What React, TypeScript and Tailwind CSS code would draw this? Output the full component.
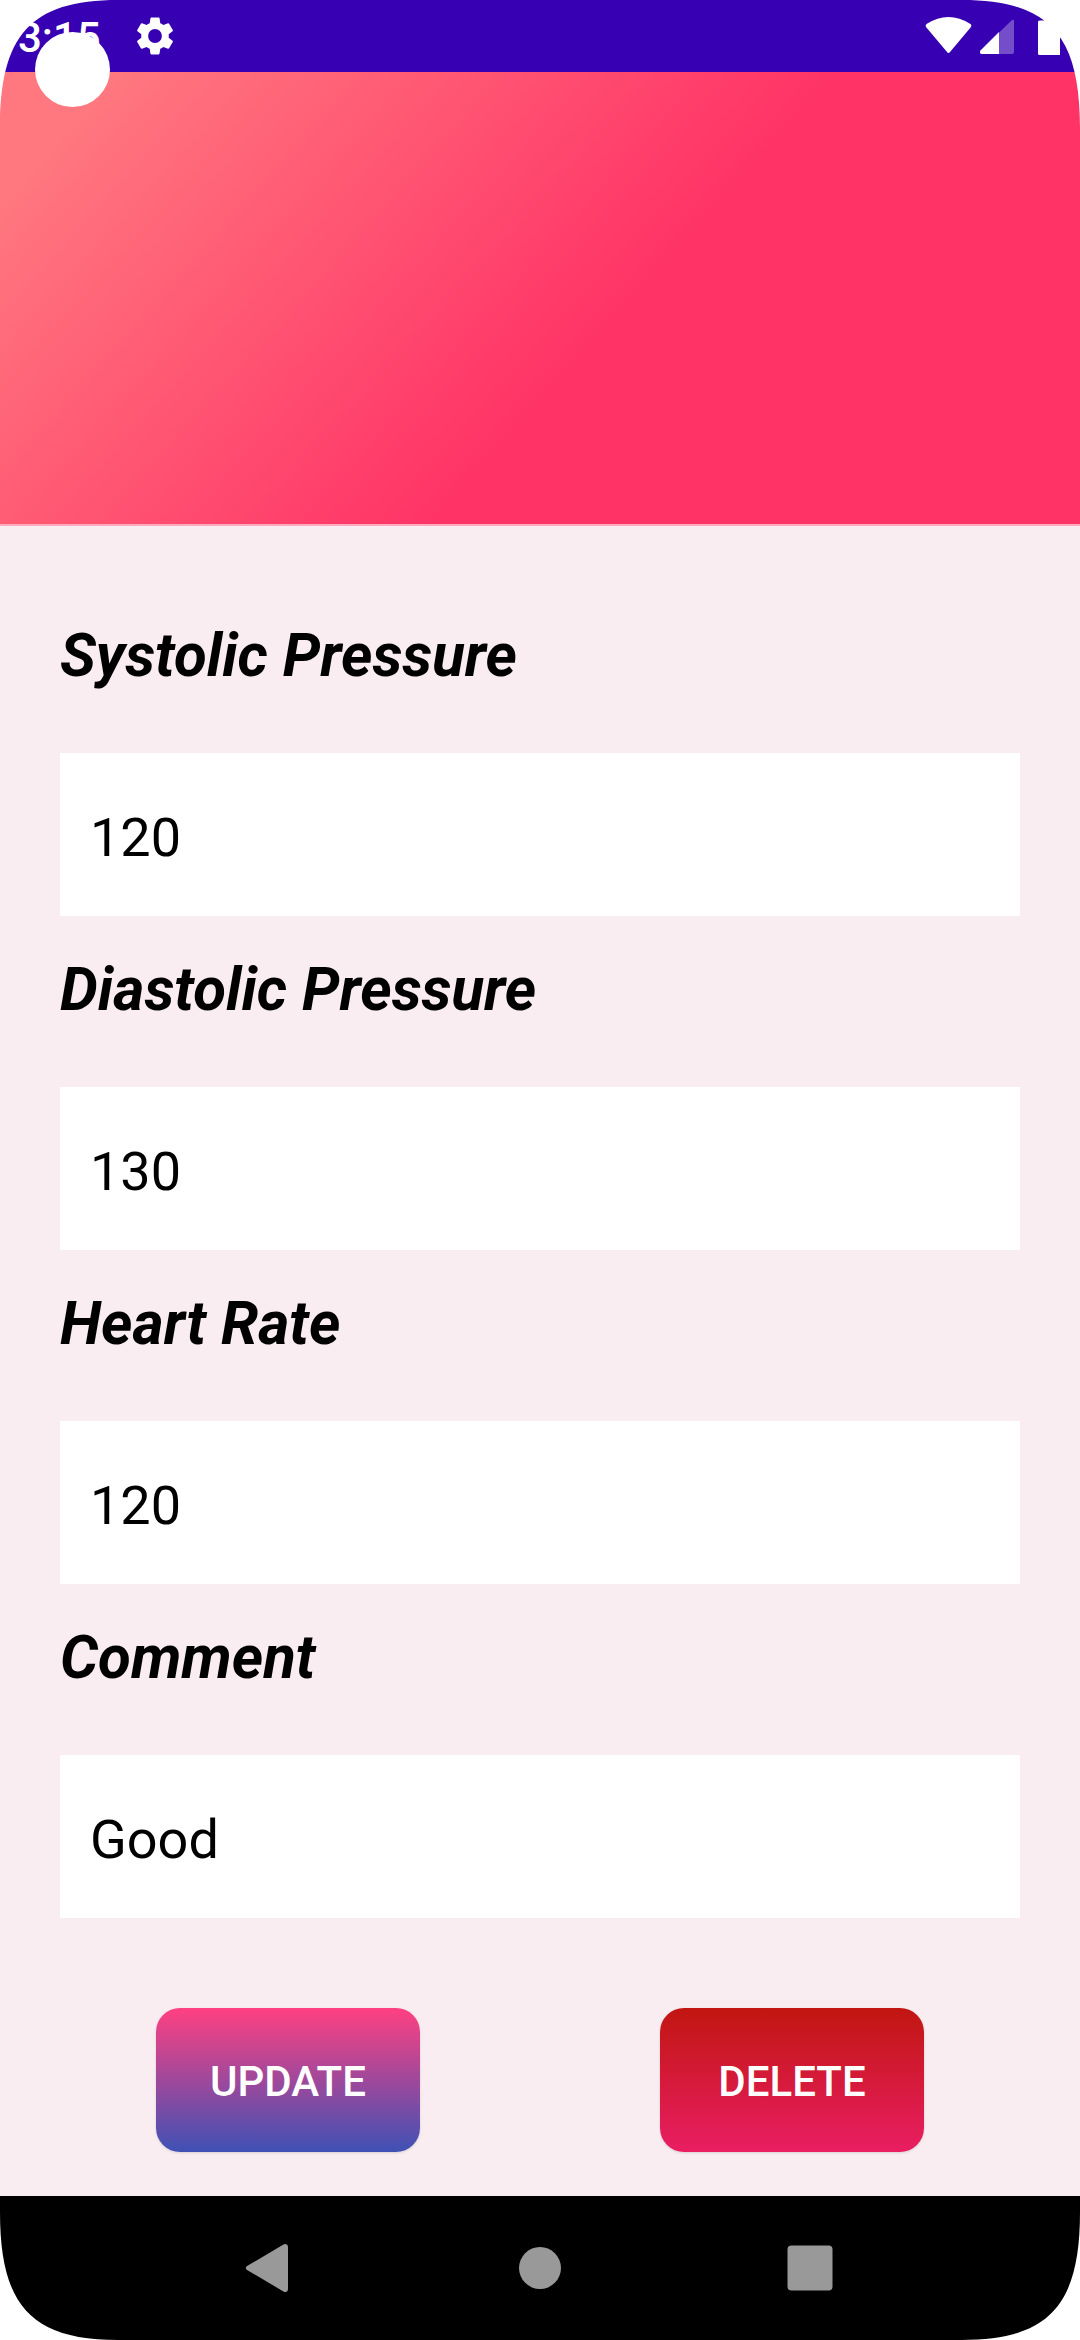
const FIELDS = [
  { id: "systolic", label: "Systolic Pressure", value: "120" },
  { id: "diastolic", label: "Diastolic Pressure", value: "130" },
  { id: "heart-rate", label: "Heart Rate", value: "120" },
  { id: "comment", label: "Comment", value: "Good" },
];

function Corner({ className }: { className: string }) {
  return (
    <svg
      aria-hidden="true"
      viewBox="0 0 128 128"
      className={"pointer-events-none absolute size-32 fill-white " + className}
    >
      <path d="M0 0V128C0 36 30 0 118 0Z" />
    </svg>
  );
}

function StatusBar() {
  return (
    <div className="flex h-[72px] items-center justify-between bg-[#3700b3] pl-[18px] text-white">
      <div className="flex items-center gap-8">
        <span className="w-[82px] pt-1 text-[42px] leading-[48px] font-medium">3:15</span>
        <svg viewBox="0 0 24 24" className="size-[46px] fill-current" aria-hidden="true">
          <path d="M19.14 12.94c.04-.3.06-.61.06-.94s-.02-.64-.07-.94l2.03-1.58a.49.49 0 0 0 .12-.61l-1.92-3.32a.49.49 0 0 0-.59-.22l-2.39.96a7 7 0 0 0-1.62-.94l-.36-2.54a.48.48 0 0 0-.48-.41h-3.84a.47.47 0 0 0-.47.41l-.36 2.54c-.59.24-1.13.57-1.62.94l-2.39-.96a.48.48 0 0 0-.59.22L2.74 8.87a.47.47 0 0 0 .12.61l2.03 1.58c-.05.3-.09.63-.09.94s.02.64.07.94l-2.03 1.58a.49.49 0 0 0-.12.61l1.92 3.32c.12.22.37.29.59.22l2.39-.96c.5.38 1.03.7 1.62.94l.36 2.54c.05.24.24.41.48.41h3.84c.24 0 .44-.17.47-.41l.36-2.54c.59-.24 1.13-.56 1.62-.94l2.39.96c.22.08.47 0 .59-.22l1.92-3.32a.47.47 0 0 0-.12-.61zM12 15.6A3.6 3.6 0 1 1 12 8.4a3.6 3.6 0 0 1 0 7.2" />
        </svg>
      </div>
      <svg viewBox="0 0 160 72" className="h-[72px] w-[160px] fill-current" aria-hidden="true">
        <path d="M6.500 24Q28.500 10 50.500 24Q52 25 51 27L30 52Q28.500 54 27 52L6 27Q5 25 6.500 24Z" />
        <path d="M92 20Q94 19 94 21V52Q94 54 92 54H61.500Q59 53 60.500 50.500Z" fillOpacity=".3" />
        <path d="M79 32V54H61.500Q59 53 60.500 50.500Z" />
        <path d="M118 22Q118 20.500 119.500 20.500H124V16H136V20.500H140V55H119.500Q118 55 118 53.500Z" />
      </svg>
    </div>
  );
}

export default function App() {
  return (
    <div className="relative flex min-h-screen flex-col overflow-hidden bg-[#f9edf1] font-['Roboto',sans-serif] text-black">
      <StatusBar />
      <header className="h-[454px] border-b-2 border-[#fbaabf] bg-[linear-gradient(132deg,#ff777f_90px,#ff3366_624px)]" />

      <form className="flex grow flex-col" onSubmit={(e) => e.preventDefault()}>
        <div className="flex flex-col gap-[35px] px-[60px] pt-[91px]">
          {FIELDS.map((f) => (
            <div key={f.id} className="flex flex-col gap-[58px]">
              <label htmlFor={f.id} className="text-[60px] leading-[78px] font-bold italic">
                {f.label}
              </label>
              <input
                id={f.id}
                type="text"
                defaultValue={f.value}
                className="h-[163px] w-full bg-white px-[30px] pt-1.5 text-[54px] outline-none"
              />
            </div>
          ))}
        </div>
        <div className="flex justify-between px-[156px] pt-[90px] pb-11">
          <button
            type="submit"
            className="h-36 w-[264px] rounded-3xl bg-linear-to-b/srgb from-[#ff4081] to-[#3f51b5] pt-0.5 text-[42px] font-medium text-white shadow-sm"
          >
            UPDATE
          </button>
          <button
            type="button"
            className="h-36 w-[264px] rounded-3xl bg-linear-to-b/srgb from-[#c11611] to-[#e91e63] pt-0.5 text-[42px] font-medium text-white shadow-sm"
          >
            DELETE
          </button>
        </div>
      </form>

      <nav className="flex h-36 items-center justify-center gap-[198px] bg-black" aria-label="System">
        <button type="button" aria-label="Back">
          <svg viewBox="0 0 72 72" className="size-[72px] fill-[#999999]">
            <path d="M13 34L49.500 12.500Q51 11.500 53 12.500Q54 13.500 54 15V57Q54 58.500 53 59.500Q51 60.500 49.500 59.500L13 38Q10.500 36 13 34Z" />
          </svg>
        </button>
        <button type="button" aria-label="Home">
          <svg viewBox="0 0 72 72" className="size-[72px] fill-[#999999]">
            <circle cx="36" cy="36" r="21" />
          </svg>
        </button>
        <button type="button" aria-label="Overview">
          <svg viewBox="0 0 72 72" className="size-[72px] fill-[#999999]">
            <rect x="13.500" y="13.500" width="45" height="45" rx="4" />
          </svg>
        </button>
      </nav>

      <div aria-hidden="true" className="pointer-events-none absolute top-8 left-[35px] size-[75px] rounded-full bg-white" />
      <Corner className="top-0 left-0" />
      <Corner className="top-0 right-0 -scale-x-100" />
      <Corner className="bottom-0 left-0 -scale-y-100" />
      <Corner className="right-0 bottom-0 rotate-180" />
    </div>
  );
}
